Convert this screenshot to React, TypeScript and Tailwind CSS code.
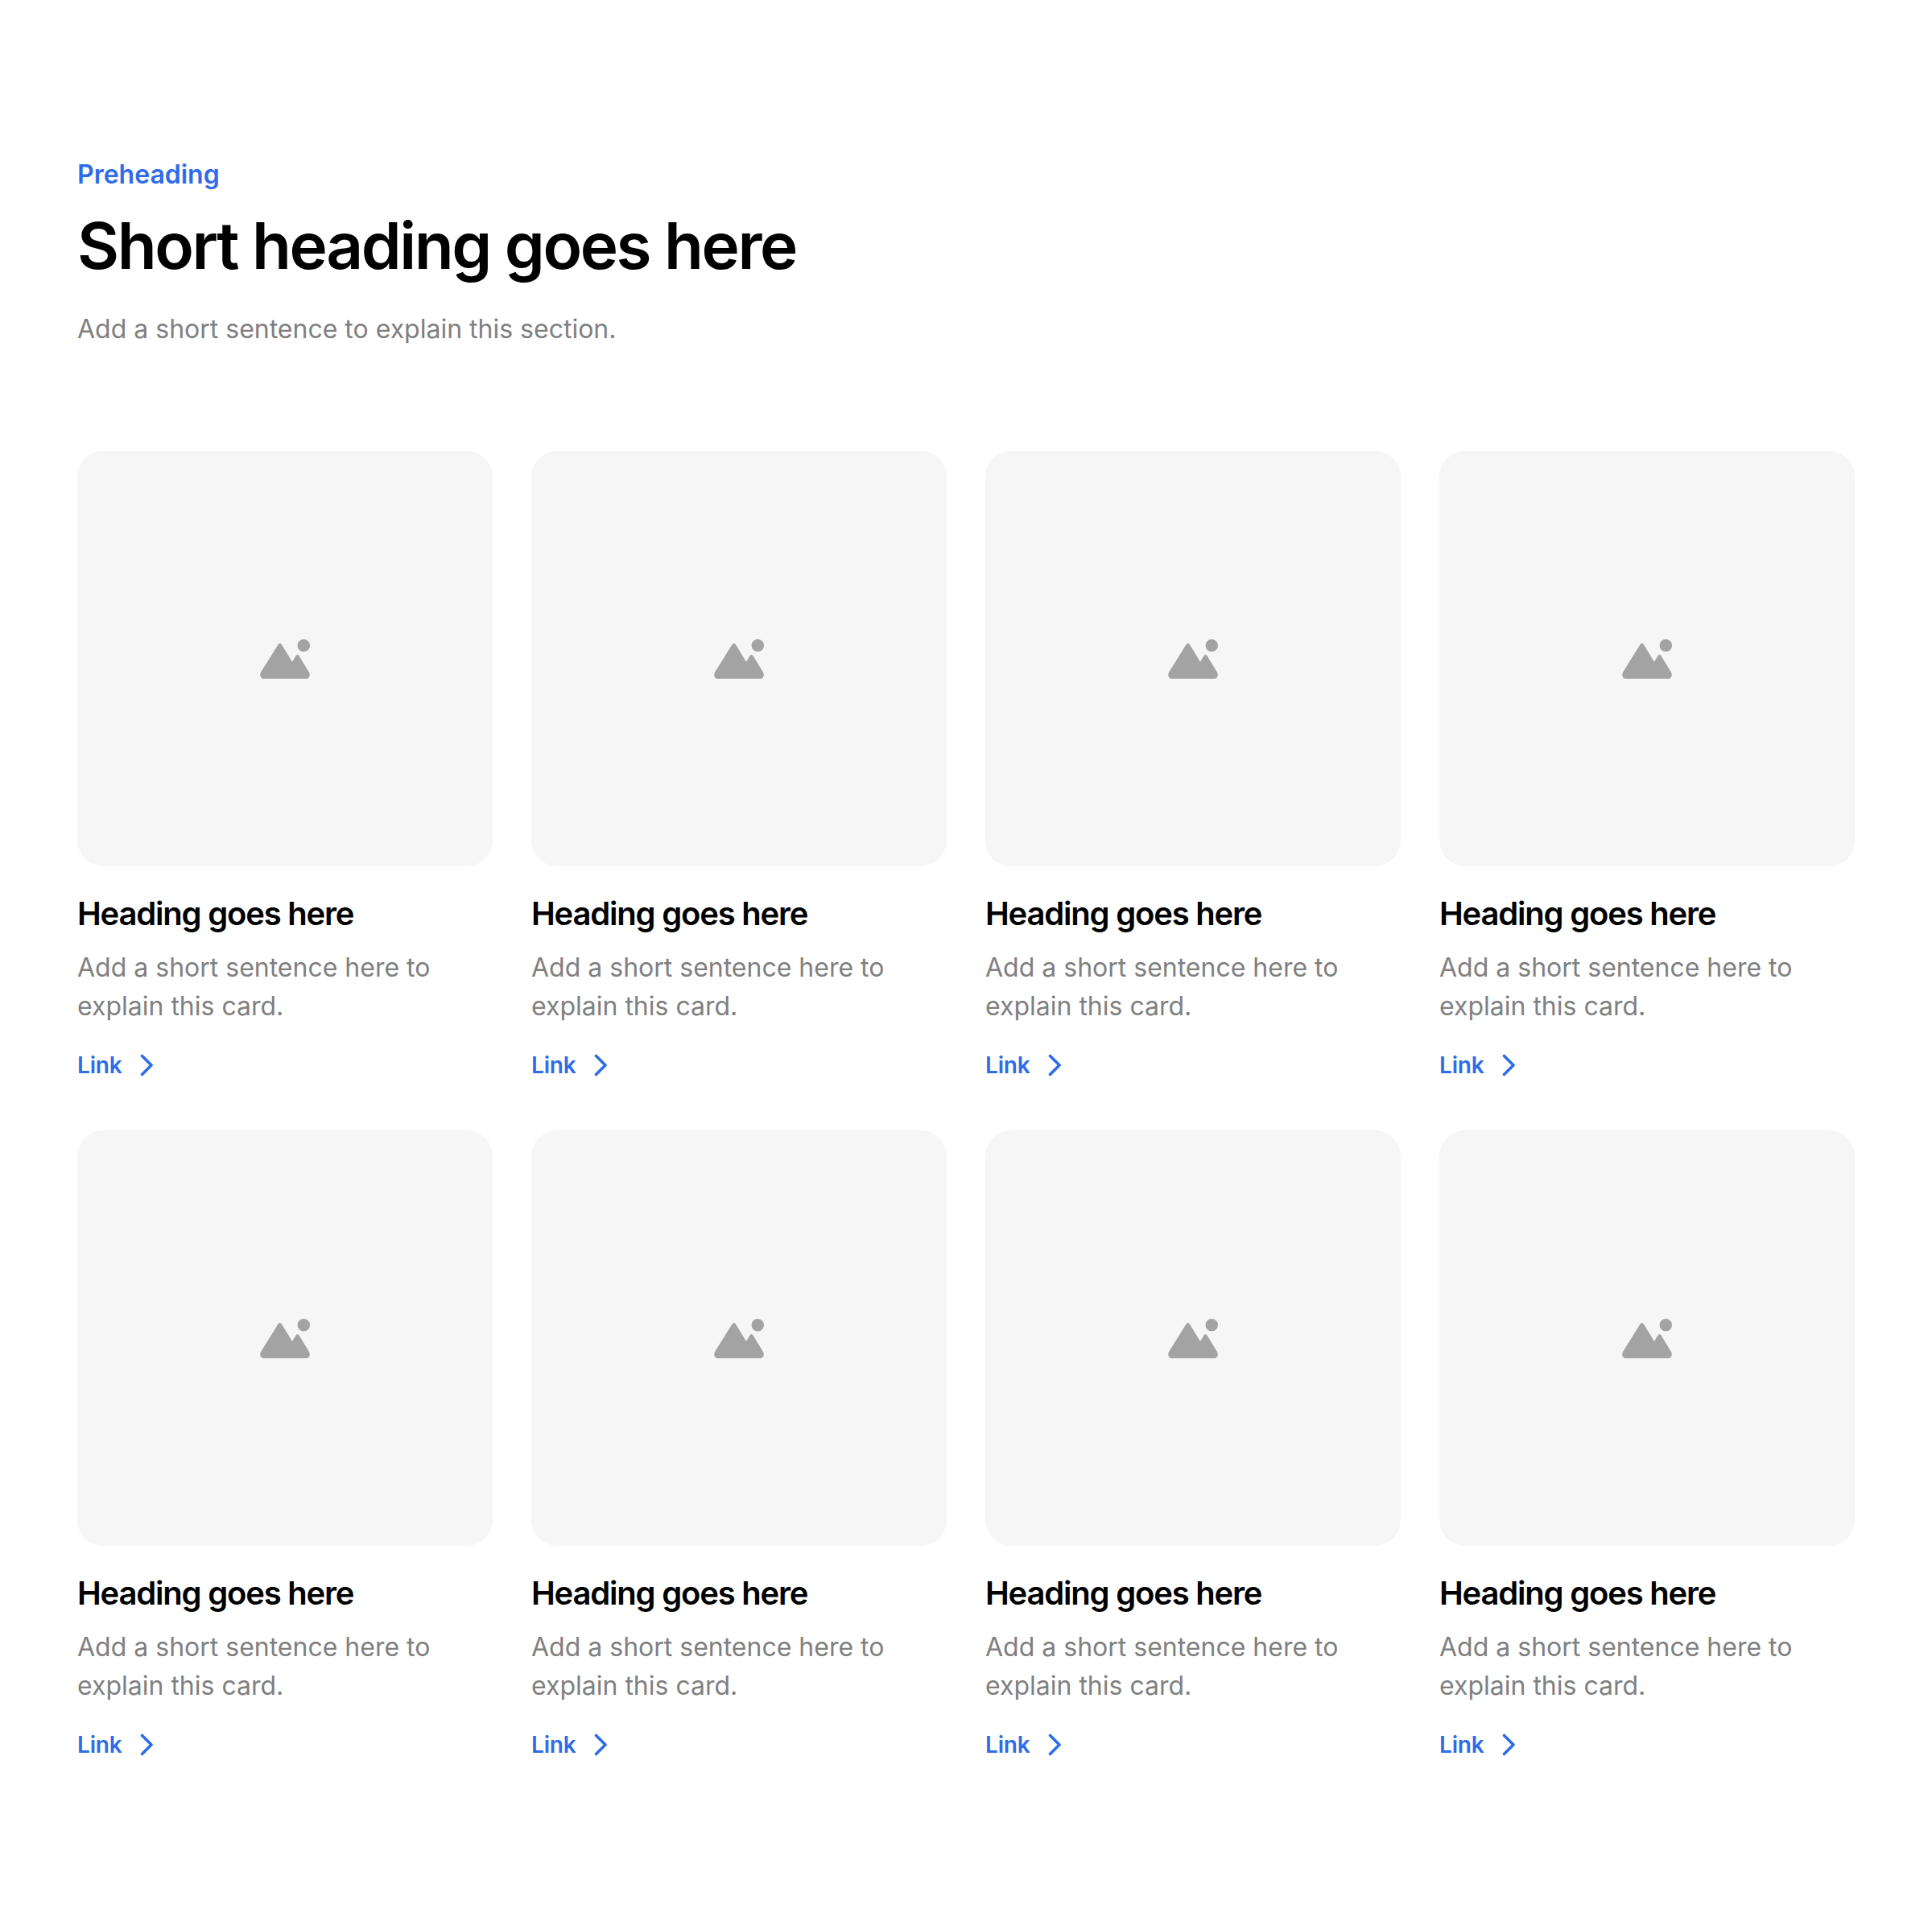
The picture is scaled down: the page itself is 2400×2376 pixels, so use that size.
const cards = Array.from({ length: 8 }, (_, i) => i);

function PlaceholderIcon() {
  return (
    <svg width="62" height="49" viewBox="0 0 62 49" fill="#a3a3a3">
      <circle cx="54.3" cy="7.700" r="7.700" />
      <path d="M22.200 6.900Q24.700 3 27.200 6.900L40 28 44.500 20.600Q46.500 17.500 48.500 20.600L61 41C62.800 44 61.500 49 57 49H5C.5 49-.8 44 1 41Z" />
    </svg>
  );
}

function Card() {
  return (
    <div className="flex flex-col">
      <div className="flex h-[516px] items-center justify-center rounded-[32px] bg-[#f6f6f6]">
        <PlaceholderIcon />
      </div>
      <h3 className="mt-[31px] text-[40px] leading-[56px] font-semibold tracking-[-1.2px] text-black">Heading goes here</h3>
      <p className="mt-[15px] text-[32px] leading-[48px] text-[#808080]">Add a short sentence here to explain this card.</p>
      <a className="mt-[29px] flex items-center gap-5 text-[28px] leading-10 font-semibold tracking-[-0.2px] text-[#2f6bea]">
        Link
        <svg width="20" height="28" viewBox="0 0 20 28" fill="none" stroke="#2f6bea" strokeWidth="3.6" strokeLinecap="round" strokeLinejoin="round">
          <path d="M5.500 2.500l11.500 11.500-11.500 11.500" />
        </svg>
      </a>
    </div>
  );
}

export default function App() {
  return (
    <div className="min-h-[2376px] bg-white px-24 pt-[197px] font-['Inter',sans-serif]">
      <p className="text-[32px] leading-10 font-semibold text-[#2f6bea]">Preheading</p>
      <h1 className="mt-5 text-[80px] leading-[96px] font-semibold tracking-[-2.4px] text-black">Short heading goes here</h1>
      <p className="mt-8 text-[32px] leading-[48px] text-[#808080]">Add a short sentence to explain this section.</p>
      <div className="mt-[127px] grid grid-cols-4 gap-x-12 gap-y-[61px]">
        {cards.map((i) => (
          <Card key={i} />
        ))}
      </div>
    </div>
  );
}
